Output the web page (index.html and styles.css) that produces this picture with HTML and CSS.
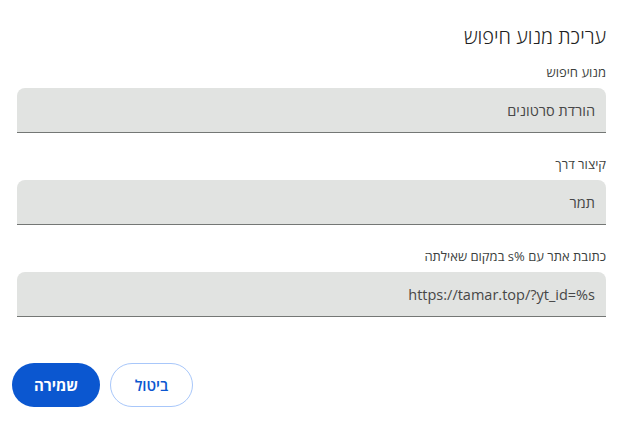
FILE: index.html
```html
<!DOCTYPE html>
<html lang="he" dir="rtl">
<head>
<meta charset="utf-8">
<title>עריכת מנוע חיפוש</title>
<link rel="stylesheet" href="styles.css">
</head>
<body>
<div class="dialog">
  <h1 class="title">עריכת מנוע חיפוש</h1>
  <div class="fields">
    <label class="field">
      <span class="label">מנוע חיפוש</span>
      <input class="input" type="text" value="הורדת סרטונים">
    </label>
    <label class="field">
      <span class="label">קיצור דרך</span>
      <input class="input" type="text" value="תמר">
    </label>
    <label class="field">
      <span class="label">כתובת אתר עם %s במקום שאילתה</span>
      <input class="input" type="text" value="https://tamar.top/?yt_id=%s">
    </label>
  </div>
  <div class="actions">
    <button class="btn btn-cancel" type="button">ביטול</button>
    <button class="btn btn-save" type="button">שמירה</button>
  </div>
</div>
</body>
</html>
```

FILE: styles.css
```css
* { box-sizing: border-box; }
html, body {
  margin: 0;
  padding: 0;
  background: #ffffff;
}
body {
  font-family: "Open Sans", "Liberation Sans", "DejaVu Sans", sans-serif;
  color: #1f1f1f;
}
.dialog {
  display: flex;
  flex-direction: column;
  padding: 23px 24px 0 17px;
}
.title {
  margin: 0;
  font-size: 20px;
  line-height: 28px;
  font-weight: 300;
  color: #1f1f1f;
}
.fields {
  display: flex;
  flex-direction: column;
  gap: 21px;
  margin-top: 11px;
}
.field {
  display: flex;
  flex-direction: column;
  gap: 6px;
}
.label {
  font-size: 13px;
  line-height: 20px;
  font-weight: 500;
  color: #3c3f3e;
}
.input {
  display: block;
  width: 100%;
  height: 45px;
  margin: 0;
  padding: 0 11px;
  border: none;
  border-bottom: 1px solid #747775;
  border-radius: 8px 8px 0 0;
  background: #e1e3e1;
  font-family: inherit;
  font-size: 14.5px;
  font-weight: 400;
  color: #474747;
  direction: rtl;
  outline: none;
}
.actions {
  display: flex;
  justify-content: flex-end;
  gap: 10px;
  margin-top: 46px;
  margin-left: -5px;
}
.btn {
  height: 44px;
  border-radius: 22px;
  font-family: inherit;
  font-size: 15px;
  font-weight: 700;
  cursor: pointer;
}
.btn-save {
  width: 88px;
  background: #0b57d0;
  border: none;
  color: #ffffff;
}
.btn-cancel {
  width: 83px;
  background: #ffffff;
  border: 1px solid #a8c7fa;
  color: #0b57d0;
  font-weight: 600;
}
```
